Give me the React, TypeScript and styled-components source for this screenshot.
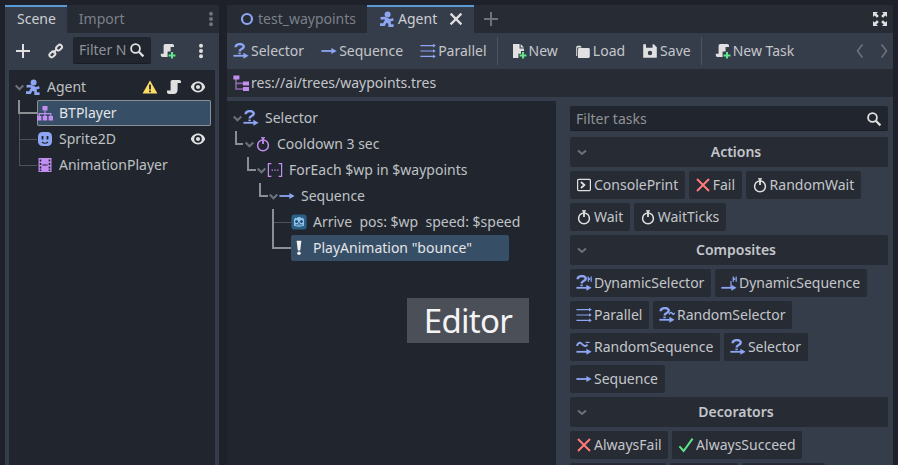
import React from "react";
import styled, { createGlobalStyle } from "styled-components";

const BLUE = "#8da5f3";
const PURPLE = "#c38ef1";
const LIGHT = "#e0e0e0";
const GREEN = "#5fe88a";
const RED = "#ff7a7a";

const GlobalStyle = createGlobalStyle`
  html, body {
    margin: 0;
    padding: 0;
    background: #1e2129;
  }
  * {
    box-sizing: border-box;
  }
`;

const Root = styled.div`
  width: 898px;
  height: 465px;
  overflow: hidden;
  display: flex;
  gap: 8px;
  padding: 5px 5px 0;
  background: #1e2129;
  color: #cdcfd2;
  font: 14px/20px "Noto Sans", sans-serif;
`;

const Dock = styled.div`
  width: 214px;
  flex: none;
  display: flex;
  flex-direction: column;
  background: #363d4a;
`;

const Main = styled.div`
  flex: 1;
  min-width: 0;
  display: flex;
  flex-direction: column;
  background: #363d4a;
`;

const TabBar = styled.div`
  height: 28px;
  flex: none;
  display: flex;
  align-items: center;
  background: #262b34;
`;

const Tab = styled.div<{ $active?: boolean }>`
  height: 28px;
  display: flex;
  align-items: center;
  gap: 3px;
  padding: 0 11px 2px 12px;
  border-top: 2px solid ${(p) => (p.$active ? "#5a9bd5" : "transparent")};
  background: ${(p) => (p.$active ? "#363d4a" : "transparent")};
  color: ${(p) => (p.$active ? "#cdcfd2" : "#7c8088")};
`;

const TabClose = styled.span`
  display: flex;
  margin-left: 8px;
  margin-right: -1px;
`;

const TabEnd = styled.span<{ $inset?: number }>`
  display: flex;
  margin-left: auto;
  padding-right: ${(p) => p.$inset ?? 0}px;
`;

const TabAdd = styled.span`
  display: flex;
  margin-left: 9px;
`;

const DockTools = styled.div`
  height: 37px;
  flex: none;
  display: flex;
  align-items: center;
  padding: 0 10px 2px;
`;

const DockFilter = styled.div`
  width: 78px;
  height: 27px;
  margin: 0 9px 0 10px;
  padding: 0 6px;
  display: flex;
  align-items: center;
  justify-content: space-between;
  background: #21262e;
  border-bottom: 1px solid #1a1d23;
  border-radius: 2px;
  color: #8f9298;
  white-space: nowrap;
`;

const DockTool = styled.span<{ $left?: number }>`
  display: flex;
  margin-left: ${(p) => p.$left ?? 0}px;
`;

const TreePanel = styled.div<{ $width?: number }>`
  position: relative;
  flex: ${(p) => (p.$width ? "none" : "1")};
  width: ${(p) => (p.$width ? `${p.$width}px` : "auto")};
  padding: 4px 4px 0 5px;
  background: #21262e;
`;

const DockBody = styled.div`
  flex: 1;
  display: flex;
  padding: 0 4px;
`;

const TreeLines = styled.svg`
  position: absolute;
  left: 0;
  top: 0;
  width: 100%;
  height: 100%;
  pointer-events: none;
  fill: none;
`;

const Row = styled.div<{ $depth: number }>`
  position: relative;
  height: 26px;
  display: flex;
  align-items: center;
  padding-left: ${(p) => p.$depth * 12}px;
`;

const Fold = styled.span`
  width: 11px;
  flex: none;
  display: flex;
`;

const RowBody = styled.div<{ $selected?: boolean; $outlined?: boolean; $width?: number }>`
  height: 26px;
  flex: ${(p) => (p.$width ? "none" : "1")};
  width: ${(p) => (p.$width ? `${p.$width}px` : "auto")};
  min-width: 0;
  display: flex;
  align-items: center;
  gap: 6px;
  padding-right: 5px;
  border-radius: 2px;
  white-space: nowrap;
  background: ${(p) => (p.$selected ? "#364e66" : "transparent")};
  box-shadow: ${(p) => (p.$outlined ? "inset 0 0 0 1px #8b9097" : "none")};
  color: ${(p) => (p.$selected ? "#e4e5e7" : "#bfc1c5")};
`;

const RowTrail = styled.span`
  margin-left: auto;
  display: flex;
  gap: 8px;
`;

const Toolbar = styled.div`
  height: 36px;
  flex: none;
  display: flex;
  align-items: center;
  gap: 9px;
  padding: 0 2px;
`;

const ToolButton = styled.div`
  display: flex;
  align-items: center;
  gap: 2px;
  padding: 0 4px;
  white-space: nowrap;
  color: #c4c6ca;
`;

const ToolSeparator = styled.div`
  width: 1px;
  height: 28px;
  background: #4d5360;
  margin: 0 0 0 -3px;
`;

const Pager = styled.div`
  margin-left: auto;
  margin-right: -1px;
  display: flex;
  gap: 8px;
`;

const PathBar = styled.div`
  height: 28px;
  flex: none;
  display: flex;
  align-items: center;
  gap: 2px;
  padding-left: 6px;
  background: #262b34;
  color: #c4c6ca;
`;

const Workspace = styled.div`
  flex: 1;
  min-height: 0;
  display: flex;
  margin-top: 4px;
`;

const Caption = styled.div`
  position: absolute;
  left: 180px;
  top: 197px;
  width: 122px;
  height: 45px;
  display: flex;
  align-items: center;
  justify-content: center;
  background: #4b4f58;
  color: #f4f4f5;
  font: 33px/45px "Noto Sans", sans-serif;
  letter-spacing: -0.7px;
`;

const TaskPanel = styled.div`
  flex: 1;
  min-width: 0;
  display: flex;
  flex-direction: column;
  gap: 4px;
  padding: 5px 5px 0 14px;
`;

const TaskFilter = styled.div`
  height: 25px;
  flex: none;
  display: flex;
  align-items: center;
  justify-content: space-between;
  padding: 1px 6px 0;
  margin-bottom: 2px;
  background: #21262e;
  border-bottom: 1px solid #1a1d23;
  border-radius: 2px;
  color: #8f9298;
`;

const SectionHeader = styled.div`
  position: relative;
  height: 30px;
  flex: none;
  display: flex;
  align-items: center;
  justify-content: center;
  padding-left: 14px;
  background: #262b34;
  border-radius: 2px;
  font-weight: 600;
  color: #c4c6ca;
`;

const SectionFold = styled.span`
  position: absolute;
  left: 4px;
  top: 7px;
  display: flex;
`;

const TaskGrid = styled.div`
  display: flex;
  flex-wrap: wrap;
  gap: 4px;
`;

const TaskButton = styled.div`
  height: 28px;
  display: flex;
  align-items: center;
  gap: 2px;
  padding: 0 6.5px 0 6px;
  background: #262b34;
  border-radius: 2px;
  white-space: nowrap;
  color: #c4c6ca;
`;

const Glyph = styled.svg.attrs({ viewBox: "0 0 16 16", width: 16, height: 16 })<{ $tone?: string }>`
  flex: none;
  display: block;
  color: ${(p) => p.$tone ?? LIGHT};
`;

type IconProps = { tone?: string };

const line = { fill: "none", stroke: "currentColor", strokeWidth: 1.8 };
const thin = { fill: "none", stroke: "currentColor", strokeWidth: 1.2 };

const AgentIcon = () => (
  <Glyph $tone={BLUE}>
    <circle cx="8.6" cy="3.4" r="3" fill="currentColor" />
    <path
      fill="none"
      stroke="currentColor"
      strokeWidth="2.6"
      d="M1.6 7.4 5.4 7l3 1.2 2.4 1.2 3.6-1.2M7 7.4v3l3.6 1.4v2.8h4M6.4 10.6l-1.4 3H1"
    />
  </Glyph>
);

const TreeNodeIcon = () => (
  <Glyph $tone={PURPLE}>
    <path fill="currentColor" d="M5.5 1h5v4.6h-5zM0 11h4.4v4.4H0zM5.8 11h4.4v4.4H5.8zM11.6 11H16v4.4h-4.4z" />
    <path {...thin} d="M8 5.5v5.5M2.2 11V8.6h11.6V11" />
  </Glyph>
);

const SpriteIcon = () => (
  <Glyph>
    <rect x="1" y="1" width="14" height="14" rx="4.5" fill={BLUE} />
    <path fill="#21262e" d="M4.6 5h1.8v3.4H4.6zM9.6 5h1.8v3.4H9.6z" />
    <path fill="none" stroke="#21262e" strokeWidth="1.4" d="M5 11c1.6 1.5 4.4 1.5 6 0" />
  </Glyph>
);

const FilmIcon = () => (
  <Glyph $tone={PURPLE}>
    <path
      fill="currentColor"
      fillRule="evenodd"
      d="M1.5 1h13v14h-13zM2.7 2.6v2h1.6v-2zM2.7 6v2h1.6V6zM2.7 9.4v2h1.6v-2zM2.7 12.6v1.4h1.6v-1.4zM11.7 2.6v2h1.6v-2zM11.7 6v2h1.6V6zM11.7 9.4v2h1.6v-2zM11.7 12.6v1.4h1.6v-1.4zM5.4 7.5v1h5.2v-1z"
    />
  </Glyph>
);

const PlusIcon = ({ tone }: IconProps) => (
  <Glyph $tone={tone}>
    <path fill="none" stroke="currentColor" strokeWidth="2" d="M8 1v14M1 8h14" />
  </Glyph>
);

const LinkIcon = () => (
  <Glyph>
    <g fill="none" stroke="currentColor" strokeWidth="2">
      <rect x="8" y="1.6" width="6.4" height="4.4" rx="2.2" transform="rotate(-45 11.2 3.8) translate(0 1.2)" />
      <rect x="1.6" y="8.6" width="6.4" height="4.4" rx="2.2" transform="rotate(-45 4.8 10.8) translate(0 0.8)" />
      <path d="M6 10l4-4" />
    </g>
  </Glyph>
);

const SearchIcon = () => (
  <Glyph>
    <circle {...line} cx="6.5" cy="6.5" r="4.4" />
    <path fill="none" stroke="currentColor" strokeWidth="2.2" d="M9.8 9.8 14.4 14.4" />
  </Glyph>
);

const ScriptIcon = () => (
  <Glyph>
    <path
      fill={LIGHT}
      d="M6.4 1h6.8c1.2 0 1.8.8 1.8 1.8V4h-3.4v6.6c0 2.4-1 4.4-3.2 4.4H3c-1.2 0-2-.8-2-2v-1.6h3.6V3c0-1.2.6-2 1.8-2z"
    />
  </Glyph>
);

const GreenPlus = () => (
  <path fill="none" stroke={GREEN} strokeWidth="2" d="M12 9v6.6M8.6 12.4h6.8" />
);

const ScriptAddIcon = () => (
  <Glyph>
    <path
      fill={LIGHT}
      d="M5.4 1h6.8c1.2 0 1.8.8 1.8 1.8V4h-3.4v4.6H7.6V14H2.6C1.4 14 .8 13.2.8 12v-1.2h2.8V3c0-1.2.6-2 1.8-2z"
    />
    <GreenPlus />
  </Glyph>
);

const DotsIcon = ({ tone }: IconProps) => (
  <Glyph $tone={tone}>
    <circle cx="8" cy="2.8" r="2" fill="currentColor" />
    <circle cx="8" cy="8" r="2" fill="currentColor" />
    <circle cx="8" cy="13.2" r="2" fill="currentColor" />
  </Glyph>
);

const WarningIcon = () => (
  <Glyph>
    <path fill="#ffdd65" d="M8 1.4 15.4 14.6H.6z" />
    <path fill="#21262e" d="M7.1 5.4h1.8v5H7.1zM7.1 11.4h1.8v1.8H7.1z" />
  </Glyph>
);

const EyeIcon = () => (
  <Glyph>
    <path fill={LIGHT} d="M8 2.6C4.6 2.6 1.8 5 .8 8c1 3 3.8 5.4 7.2 5.4s6.2-2.4 7.2-5.4c-1-3-3.8-5.4-7.2-5.4z" />
    <circle cx="8" cy="8" r="3.8" fill="#21262e" />
    <circle cx="8" cy="8" r="2.1" fill={LIGHT} />
  </Glyph>
);

const ChevronDown = () => (
  <Glyph $tone="#6d7179" style={{ width: 11, height: 11 }}>
    <path fill="none" stroke="currentColor" strokeWidth="3" d="M2.5 5 8 10.5 13.5 5" />
  </Glyph>
);

const SectionChevron = () => (
  <Glyph $tone="#6d7179">
    <path fill="none" stroke="currentColor" strokeWidth="2" d="M4 6.4 8 10 12 6.4" />
  </Glyph>
);

const Question = ({ x = 0 }: { x?: number }) => (
  <g transform={`translate(${x} 0)`} fill="none" stroke="currentColor" strokeWidth="2.4">
    <path d="M2.6 4.2C2.8.2 10.8.2 10.8 3.6c0 2.6-4.2 2.2-4.2 4.8" />
    <path d="M5.4 10.4h2.4" strokeWidth="1.6" />
  </g>
);

const ArrowLine = ({ y = 12.8, end = 13 }: { y?: number; end?: number }) => (
  <>
    <path fill="none" stroke="currentColor" strokeWidth="1.8" d={`M.4 ${y}H${end}`} />
    <path fill="currentColor" d={`M${end - 2.6} ${y - 3} ${end + 2.6} ${y} ${end - 2.6} ${y + 3}z`} />
  </>
);

const SelectorIcon = () => (
  <Glyph $tone={BLUE}>
    <Question />
    <ArrowLine />
  </Glyph>
);

const SequenceIcon = () => (
  <Glyph $tone={BLUE}>
    <ArrowLine y={8} />
  </Glyph>
);

const ParallelIcon = () => (
  <Glyph $tone={BLUE}>
    <path {...thin} d="M.4 2.6H14M.4 8H14M.4 13.4H14" />
    <path fill="currentColor" d="M13 .8l2.8 1.8L13 4.4zM13 6.2 15.8 8 13 9.8zM13 11.6l2.8 1.8-2.8 1.8z" />
  </Glyph>
);

const DynamicMark = () => (
  <path fill="currentColor" d="M11.6 1.4h1.2v5.4h-1.2zM14.6 1.4h1.2v5.4h-1.2zM12.8 2.6l1.8 1.4-1.8 1.4z" />
);

const DynamicSelectorIcon = () => (
  <Glyph $tone={BLUE}>
    <Question x={-1} />
    <DynamicMark />
    <ArrowLine />
  </Glyph>
);

const DynamicSequenceIcon = () => (
  <Glyph $tone={BLUE}>
    <DynamicMark />
    <path {...thin} d="M10 12.6V6" />
    <ArrowLine />
  </Glyph>
);

const RandomMark = () => (
  <path fill="none" stroke="currentColor" strokeWidth="1.4" d="M10 7.4c1.2-2.4 2.6-2.4 3.2-1s1.8 1 2.6-.6" />
);

const RandomSelectorIcon = () => (
  <Glyph $tone={BLUE}>
    <Question x={-1} />
    <RandomMark />
    <ArrowLine />
  </Glyph>
);

const RandomSequenceIcon = () => (
  <Glyph $tone={BLUE}>
    <path fill="none" stroke="currentColor" strokeWidth="2" d="M.8 6.8C2.4 3 4.4 3 6 5s4 3 5.4.6" />
    <path {...thin} d="M9.6 3.4h4" />
    <ArrowLine />
  </Glyph>
);

const NewDocIcon = () => (
  <Glyph>
    <path fill={LIGHT} d="M2 1h6.6v4.4H13V8h-3v2.8H7.4V15H2z" />
    <path fill={LIGHT} d="M9.6 1 13 4.4H9.6z" />
    <GreenPlus />
  </Glyph>
);

const FolderIcon = () => (
  <Glyph>
    <path fill={LIGHT} d="M1.2 4.4C1.2 3.4 2 2.8 3 2.8h2.6l1.2 1.6h-3.6c-.6 0-1 .4-1 1V13h-1z" />
    <path fill={LIGHT} d="M3 6.4C3 5.6 3.6 5 4.4 5h9c.8 0 1.4.6 1.4 1.4v7.2c0 .8-.6 1.4-1.4 1.4H3z" />
  </Glyph>
);

const SaveIcon = () => (
  <Glyph>
    <path
      fill={LIGHT}
      fillRule="evenodd"
      d="M1.2 1.2h10.6l3 3v10.6H1.2zM4 1.2v3.6h6.6V1.2zM8 7.8a2.2 2.2 0 1 0 0 4.4 2.2 2.2 0 0 0 0-4.4z"
    />
  </Glyph>
);

const PrevIcon = () => (
  <Glyph $tone="#6e727a">
    <path fill="none" stroke="currentColor" strokeWidth="1.6" d="M10.5 1.6 5.5 8l5 6.4" />
  </Glyph>
);

const NextIcon = () => (
  <Glyph $tone="#6e727a">
    <path fill="none" stroke="currentColor" strokeWidth="1.6" d="M5.5 1.6 10.5 8l-5 6.4" />
  </Glyph>
);

const FullscreenIcon = () => (
  <Glyph>
    <path
      fill="currentColor"
      d="M1 1h5L4.4 2.6l2.4 2.4-1.8 1.8-2.4-2.4L1 6zM15 1v5l-1.6-1.6-2.4 2.4-1.8-1.8 2.4-2.4L10 1zM1 15v-5l1.6 1.6 2.4-2.4 1.8 1.8-2.4 2.4L6 15zM15 15h-5l1.6-1.6-2.4-2.4 1.8-1.8 2.4 2.4L15 10z"
    />
  </Glyph>
);

const SceneRingIcon = () => (
  <Glyph $tone={BLUE}>
    <circle cx="8" cy="8" r="5" fill="none" stroke="currentColor" strokeWidth="2.2" />
  </Glyph>
);

const CloseIcon = () => (
  <Glyph>
    <path fill="none" stroke="currentColor" strokeWidth="2.2" d="M2.6 2.6 13.4 13.4M13.4 2.6 2.6 13.4" />
  </Glyph>
);

const TreeFileIcon = () => (
  <Glyph $tone={PURPLE}>
    <path fill="none" stroke="#8a68ad" strokeWidth="1.6" d="M3 4v10h7M3 8.4h7" />
    <path fill="currentColor" d="M.4 .6h6v4h-6zM10 6.4h6v4h-6zM10 12h6v4h-6z" />
  </Glyph>
);

const TimerIcon = ({ tone }: IconProps) => (
  <Glyph $tone={tone}>
    <circle fill="none" stroke="currentColor" strokeWidth="1.5" cx="8" cy="9.4" r="5.4" />
    <path fill="none" stroke="currentColor" strokeWidth="1.8" d="M8 1.8v6.2" />
    <path fill="none" stroke="currentColor" strokeWidth="1.2" d="M6 1.8h4" />
  </Glyph>
);

const ForEachIcon = () => (
  <Glyph $tone={PURPLE}>
    <path {...thin} d="M4.4 1.6H1.4v12.8h3M11.6 1.6h3v12.8h-3" />
    <path fill="currentColor" d="M4.6 7.4h1.3v1.3H4.6zM7.4 7.4h1.3v1.3H7.4zM10.2 7.4h1.3v1.3h-1.3z" />
  </Glyph>
);

const GodotIcon = () => (
  <Glyph>
    <rect x=".4" y=".4" width="15.2" height="15.2" rx="3" fill="#2c5f86" />
    <path
      fill="#8cc4ee"
      d="M3 5.4 4.4 3.6l1.4.8L6.6 3h2.8l.8 1.4 1.4-.8L13 5.4v6.2c-1.4 1.4-8.6 1.4-10 0z"
    />
    <circle cx="5.6" cy="7.6" r="1.4" fill="#1d3f5a" />
    <circle cx="10.4" cy="7.6" r="1.4" fill="#1d3f5a" />
    <path fill="#1d3f5a" d="M7.4 8.6h1.2v1.4H7.4zM4.6 10.6h6.8v.7H4.6z" />
  </Glyph>
);

const BangIcon = () => (
  <Glyph>
    <path fill="#f2f2f2" d="M5.6 .8h4.8L9.2 10.6H6.8z" />
    <circle cx="8" cy="13.2" r="1.8" fill="#f2f2f2" />
  </Glyph>
);

const ConsoleIcon = () => (
  <Glyph>
    <rect {...thin} x="1.6" y="2.4" width="12.8" height="11.2" rx="1" />
    <path fill="none" stroke="currentColor" strokeWidth="1.8" d="M5 5l3.4 3L5 11" />
  </Glyph>
);

const CrossIcon = ({ tone = RED }: IconProps) => (
  <Glyph $tone={tone}>
    <path fill="none" stroke="currentColor" strokeWidth="2" d="M2 2l12 12M14 2 2 14" />
  </Glyph>
);

const CheckIcon = () => (
  <Glyph $tone={GREEN}>
    <path fill="none" stroke="currentColor" strokeWidth="2" d="M1.4 9.4 5.6 14 14.6 1.6" />
  </Glyph>
);

const sections = [
  {
    title: "Actions",
    tasks: [
      { name: "ConsolePrint", icon: <ConsoleIcon /> },
      { name: "Fail", icon: <CrossIcon /> },
      { name: "RandomWait", icon: <TimerIcon /> },
      { name: "Wait", icon: <TimerIcon /> },
      { name: "WaitTicks", icon: <TimerIcon /> },
    ],
  },
  {
    title: "Composites",
    tasks: [
      { name: "DynamicSelector", icon: <DynamicSelectorIcon /> },
      { name: "DynamicSequence", icon: <DynamicSequenceIcon /> },
      { name: "Parallel", icon: <ParallelIcon /> },
      { name: "RandomSelector", icon: <RandomSelectorIcon /> },
      { name: "RandomSequence", icon: <RandomSequenceIcon /> },
      { name: "Selector", icon: <SelectorIcon /> },
      { name: "Sequence", icon: <SequenceIcon /> },
    ],
  },
  {
    title: "Decorators",
    tasks: [
      { name: "AlwaysFail", icon: <CrossIcon /> },
      { name: "AlwaysSucceed", icon: <CheckIcon /> },
      { name: "Cooldown", icon: <TimerIcon tone={PURPLE} /> },
      { name: "Delay", icon: <TimerIcon tone={PURPLE} /> },
      { name: "ForEach", icon: <ForEachIcon /> },
    ],
  },
];

export default function App() {
  return (
    <Root>
      <GlobalStyle />
      <Dock>
        <TabBar>
          <Tab $active>Scene</Tab>
          <Tab>Import</Tab>
          <TabEnd>
            <DotsIcon tone="#6e727a" />
          </TabEnd>
        </TabBar>
        <DockTools>
          <PlusIcon />
          <DockTool $left={16}>
            <LinkIcon />
          </DockTool>
          <DockFilter>
            Filter N
            <SearchIcon />
          </DockFilter>
          <ScriptAddIcon />
          <DockTool $left={17}>
            <DotsIcon />
          </DockTool>
        </DockTools>
        <DockBody>
          <TreePanel>
            <TreeLines>
              <path stroke="#8b8e93" strokeWidth="2" d="M10 30v13h18" />
              <path stroke="#4e535b" d="M10.5 44v51M10 69.5h18M10 95.5h18" />
            </TreeLines>
            <Row $depth={0}>
              <Fold>
                <ChevronDown />
              </Fold>
              <RowBody>
                <AgentIcon />
                Agent
                <RowTrail>
                  <WarningIcon />
                  <ScriptIcon />
                  <EyeIcon />
                </RowTrail>
              </RowBody>
            </Row>
            <Row $depth={1}>
              <Fold />
              <RowBody $selected $outlined>
                <TreeNodeIcon />
                BTPlayer
              </RowBody>
            </Row>
            <Row $depth={1}>
              <Fold />
              <RowBody>
                <SpriteIcon />
                Sprite2D
                <RowTrail>
                  <EyeIcon />
                </RowTrail>
              </RowBody>
            </Row>
            <Row $depth={1}>
              <Fold />
              <RowBody>
                <FilmIcon />
                AnimationPlayer
              </RowBody>
            </Row>
          </TreePanel>
        </DockBody>
      </Dock>
      <Main>
        <TabBar>
          <Tab>
            <SceneRingIcon />
            test_waypoints
          </Tab>
          <Tab $active>
            <AgentIcon />
            Agent
            <TabClose>
              <CloseIcon />
            </TabClose>
          </Tab>
          <TabAdd>
            <PlusIcon tone="#6e727a" />
          </TabAdd>
          <TabEnd $inset={5}>
            <FullscreenIcon />
          </TabEnd>
        </TabBar>
        <Toolbar>
          <ToolButton>
            <SelectorIcon />
            Selector
          </ToolButton>
          <ToolButton>
            <SequenceIcon />
            Sequence
          </ToolButton>
          <ToolButton>
            <ParallelIcon />
            Parallel
          </ToolButton>
          <ToolSeparator />
          <ToolButton>
            <NewDocIcon />
            New
          </ToolButton>
          <ToolButton>
            <FolderIcon />
            Load
          </ToolButton>
          <ToolButton>
            <SaveIcon />
            Save
          </ToolButton>
          <ToolSeparator />
          <ToolButton>
            <ScriptAddIcon />
            New Task
          </ToolButton>
          <Pager>
            <PrevIcon />
            <NextIcon />
          </Pager>
        </Toolbar>
        <PathBar>
          <TreeFileIcon />
          res://ai/trees/waypoints.tres
        </PathBar>
        <Workspace>
          <TreePanel $width={329}>
            <TreeLines>
              <path
                stroke="#8b8e93"
                strokeWidth="2"
                d="M9 30v13h7M21 56v13h8M33 82v13h8M46 108v39h18"
              />
              <path stroke="#4e535b" d="M47 121.5h17" />
            </TreeLines>
            <Row $depth={0}>
              <Fold>
                <ChevronDown />
              </Fold>
              <RowBody>
                <SelectorIcon />
                Selector
              </RowBody>
            </Row>
            <Row $depth={1}>
              <Fold>
                <ChevronDown />
              </Fold>
              <RowBody>
                <TimerIcon tone={PURPLE} />
                Cooldown 3 sec
              </RowBody>
            </Row>
            <Row $depth={2}>
              <Fold>
                <ChevronDown />
              </Fold>
              <RowBody>
                <ForEachIcon />
                ForEach $wp in $waypoints
              </RowBody>
            </Row>
            <Row $depth={3}>
              <Fold>
                <ChevronDown />
              </Fold>
              <RowBody>
                <SequenceIcon />
                Sequence
              </RowBody>
            </Row>
            <Row $depth={4}>
              <Fold />
              <RowBody>
                <GodotIcon />
                Arrive&nbsp; pos: $wp&nbsp; speed: $speed
              </RowBody>
            </Row>
            <Row $depth={4}>
              <Fold />
              <RowBody $selected $width={218}>
                <BangIcon />
                PlayAnimation "bounce"
              </RowBody>
            </Row>
            <Caption>Editor</Caption>
          </TreePanel>
          <TaskPanel>
            <TaskFilter>
              Filter tasks
              <SearchIcon />
            </TaskFilter>
            {sections.map((section) => (
              <React.Fragment key={section.title}>
                <SectionHeader>
                  <SectionFold>
                    <SectionChevron />
                  </SectionFold>
                  {section.title}
                </SectionHeader>
                <TaskGrid>
                  {section.tasks.map((task) => (
                    <TaskButton key={task.name}>
                      {task.icon}
                      {task.name}
                    </TaskButton>
                  ))}
                </TaskGrid>
              </React.Fragment>
            ))}
          </TaskPanel>
        </Workspace>
      </Main>
    </Root>
  );
}
